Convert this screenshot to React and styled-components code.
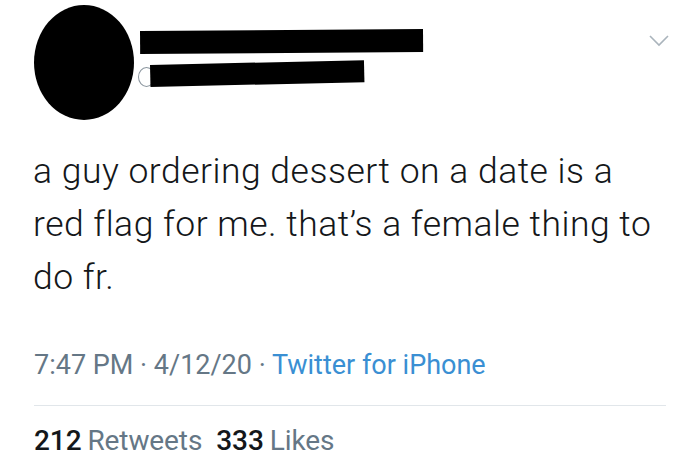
import React from 'react';
import styled, { createGlobalStyle } from 'styled-components';

const GlobalStyle = createGlobalStyle`
  html, body {
    margin: 0;
    padding: 0;
    background: #ffffff;
  }
  body {
    font-family: Roboto, "Liberation Sans", sans-serif;
    -webkit-font-smoothing: antialiased;
  }
`;

const Tweet = styled.div`
  width: 700px;
  height: 476px;
  box-sizing: border-box;
  padding: 5px 34px 0 34px;
  background: #fff;
  position: relative;
  overflow: hidden;
`;

const Header = styled.div`
  display: flex;
  align-items: flex-start;
  gap: 6px;
`;

const Avatar = styled.div`
  width: 100px;
  height: 115px;
  border-radius: 50%;
  background: #000;
  flex-shrink: 0;
`;

const Names = styled.div`
  display: flex;
  flex-direction: column;
  padding-top: 26px;
`;

const Redaction = styled.div`
  background: #000;
  width: ${p => p.w}px;
  height: ${p => p.h}px;
  margin-left: ${p => p.ml || 0}px;
  transform: rotate(${p => p.tilt}deg);
  transform-origin: left top;
`;

const HandleRow = styled.div`
  display: flex;
  align-items: center;
  margin-top: 11px;
  position: relative;
`;

const AtCircle = styled.div`
  width: 17px;
  height: 20px;
  border-radius: 50%;
  border: 1.5px solid #8a959e;
  box-sizing: border-box;
  position: absolute;
  left: -2px;
  top: 2px;
`;

const Chevron = styled.svg`
  position: absolute;
  right: 31px;
  top: 35px;
`;

const Body = styled.p`
  margin: 25px 0 0 -1px;
  font-size: 35.5px;
  line-height: 53px;
  color: #14171a;
  letter-spacing: 0.5px;
  font-weight: 300;
`;

const Meta = styled.div`
  margin-top: 45px;
  font-size: 27px;
  color: #657786;
`;

const Link = styled.span`
  color: #3a8fd3;
`;

const Divider = styled.div`
  height: 1px;
  background: #e1e6ea;
  margin-top: 24px;
  width: 632px;
`;

const Stats = styled.div`
  display: flex;
  gap: 14px;
  margin-top: 18px;
  font-size: 28px;
  letter-spacing: -0.1px;
`;

const Stat = styled.span`
  color: #657786;
  b {
    color: #14171a;
    font-weight: 500;
    margin-right: 6px;
  }
`;

export default function App() {
  return (
    <>
      <GlobalStyle />
      <Tweet>
        <Header>
          <Avatar />
          <Names>
            <Redaction w={283} h={23} tilt={-0.4} />
            <HandleRow>
              <AtCircle />
              <Redaction w={214} h={22} tilt={-1.3} ml={10} />
            </HandleRow>
          </Names>
        </Header>
        <Chevron width="20" height="12" viewBox="0 0 20 12">
          <polyline points="1,1 10,10 19,1" fill="none" stroke="#aab4bc" strokeWidth="1.6" />
        </Chevron>
        <Body>
          a guy ordering dessert on a date is a
          <br />
          red flag for me. that’s a female thing to
          <br />
          do fr.
        </Body>
        <Meta>
          7:47 PM · 4/12/20 · <Link>Twitter for iPhone</Link>
        </Meta>
        <Divider />
        <Stats>
          <Stat><b>212</b>Retweets</Stat>
          <Stat><b>333</b>Likes</Stat>
        </Stats>
      </Tweet>
    </>
  );
}
